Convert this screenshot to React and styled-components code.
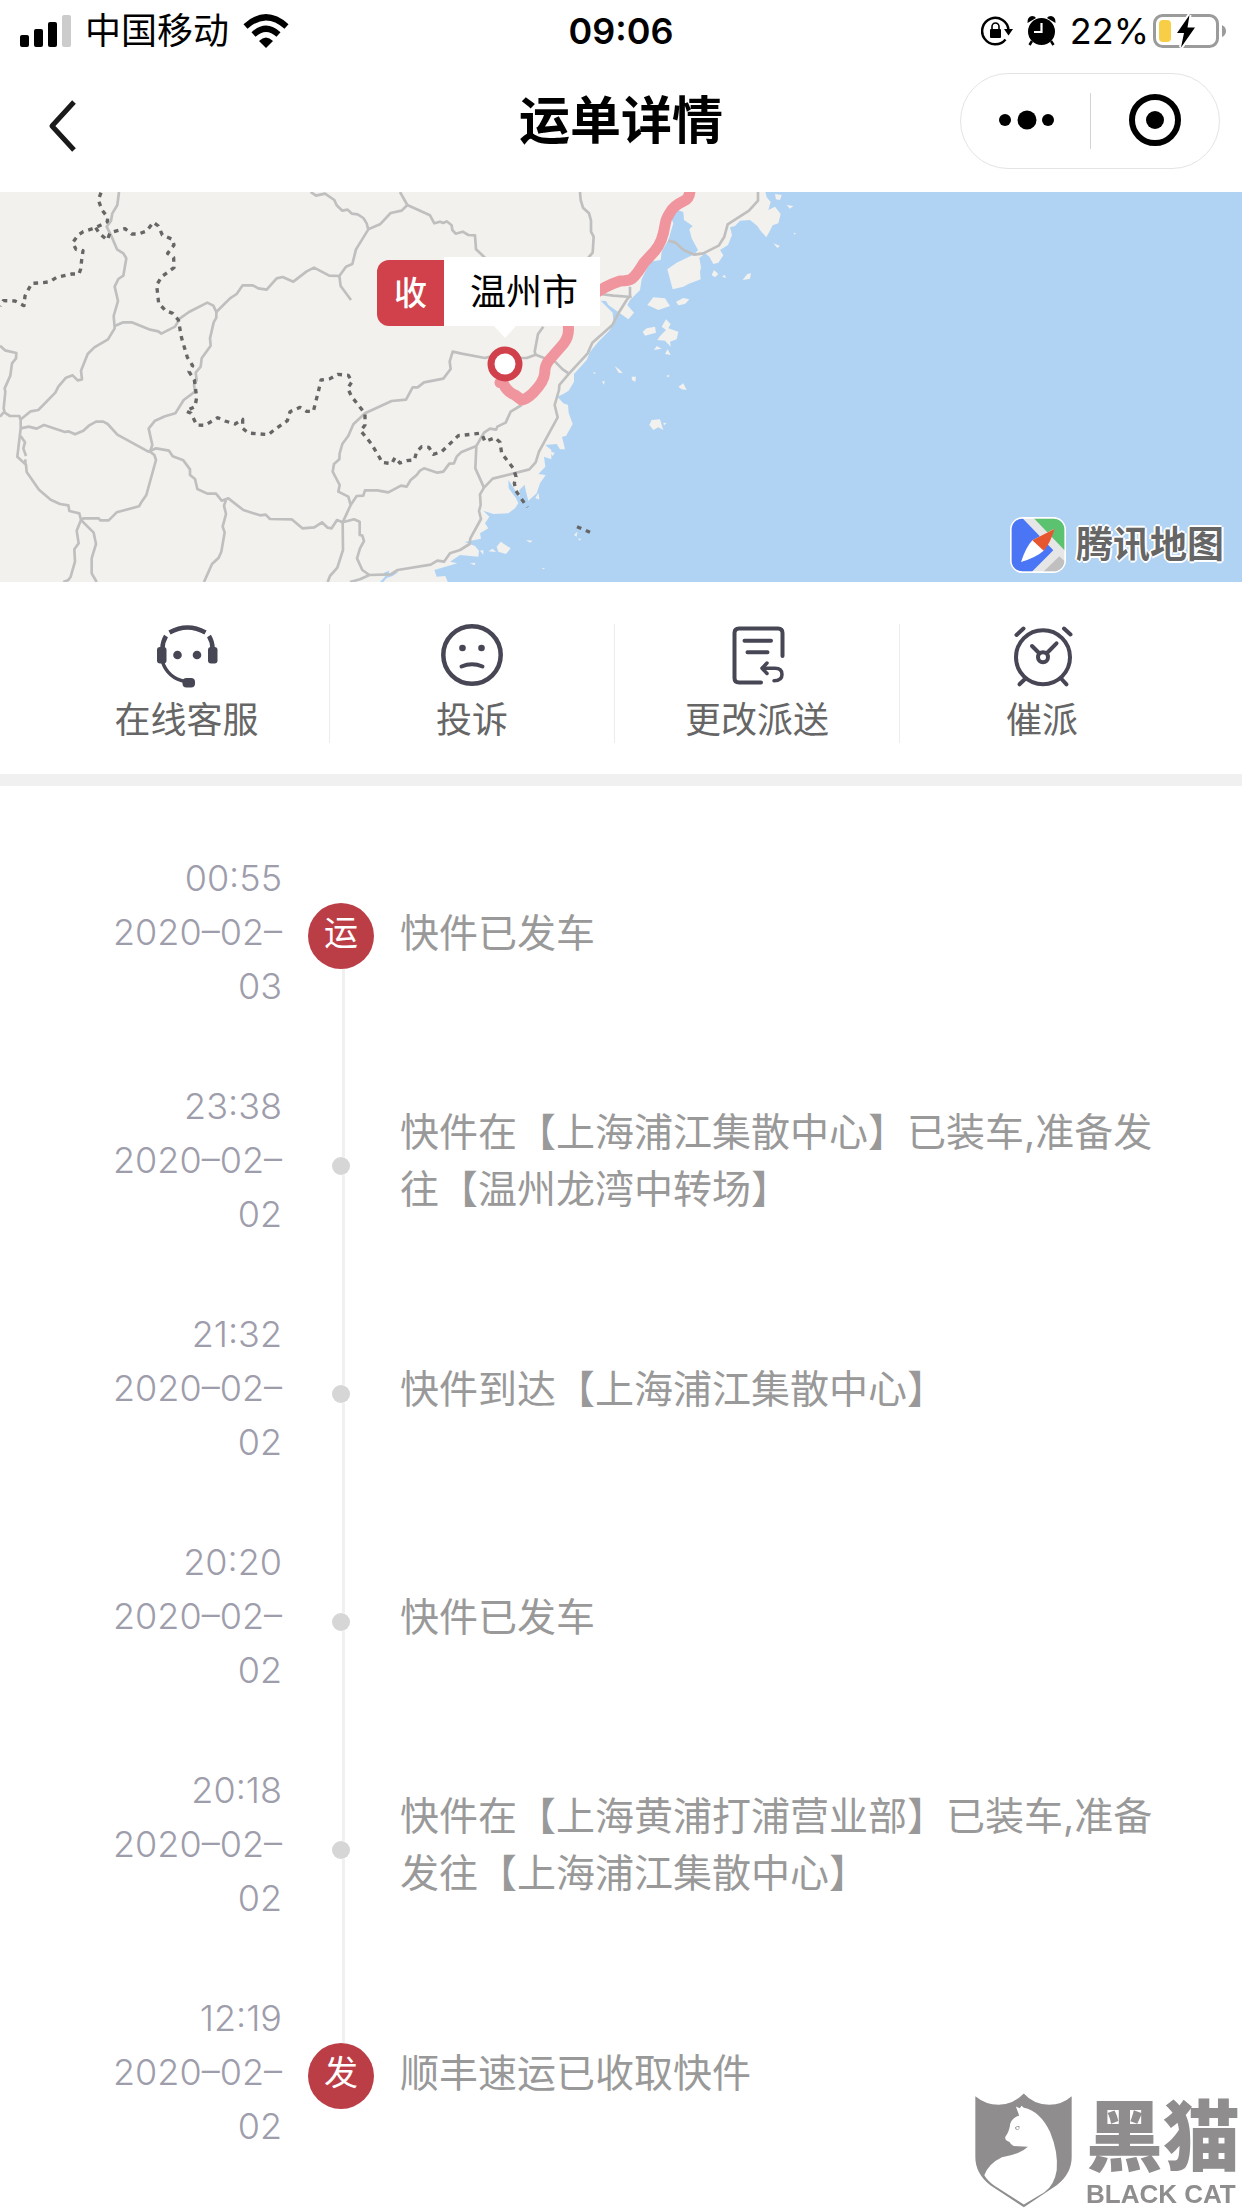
import React from 'react'
import styled, { createGlobalStyle } from 'styled-components';

const GlobalStyle = createGlobalStyle`
    *{
        box-sizing: border-box;
    }
    body{
        margin: 0;
        background-color: white;
        font-family: Inter, "Noto Sans CJK SC", sans-serif;
        color: black;
    }
    button{
        border: none;
        background: none;
        padding: 0;
        font: inherit;
        color: inherit;
        cursor: pointer;
    }
    svg{
        display: block;
        flex-shrink: 0;
    }
`

const Page = styled.div`
    min-height: 100vh;
    overflow: hidden;
`

const StatusBar = styled.div`
    display: grid;
    grid-template-columns: 1fr auto 1fr;
    align-items: center;
    height: 62px;
    padding: 0 16px;
    font-size: 36px;
    line-height: 54px;
`

const StatusGroup = styled.div`
    display: flex;
    align-items: center;
    justify-content: ${props => props.$end ? 'flex-end' : 'flex-start'};
    gap: ${props => props.$tight ? '4px' : '14px'};
`

const Clock = styled.div`
    font-weight: 600;
`

const NavBar = styled.header`
    display: grid;
    grid-template-columns: 1fr auto 1fr;
    align-items: center;
    height: 130px;
    padding: 0 22px 12px;
`

const BackButton = styled.button`
    justify-self: start;
    padding: 10px 26px 0;
`

const Title = styled.h1`
    margin: 0;
    font-size: 51px;
    line-height: 72px;
    font-weight: 700;
`

const Capsule = styled.div`
    justify-self: end;
    display: flex;
    align-items: center;
    width: 260px;
    height: 96px;
    border: 1px solid #e4e4e4;
    border-radius: 48px;
    button{
        flex: 1;
        display: flex;
        justify-content: center;
    }
    button + button{
        border-left: 1px solid #d4d4d4;
    }
`

const MapArea = styled.section`
    position: relative;
    height: 390px;
    overflow: hidden;
    background-color: #b0d3f4;
`

const Pin = styled.div`
    position: absolute;
    left: 377px;
    top: 65px;
    display: flex;
    flex-direction: column;
    align-items: center;
`

const PinLabel = styled.div`
    display: flex;
    align-items: flex-end;
    font-size: 36px;
`

const PinTag = styled.div`
    width: 67px;
    height: 66px;
    border-radius: 12px 0 0 12px;
    background-color: #d0414b;
    color: white;
    font-size: 33px;
    font-weight: 500;
    line-height: 66px;
    text-align: center;
`

const PinCity = styled.div`
    width: 156px;
    height: 69px;
    padding-left: 4px;
    background-color: white;
    line-height: 70px;
    text-align: center;
`

const PinPoint = styled.svg`
    margin-left: 32px;
`

const MapBrand = styled.div`
    position: absolute;
    right: 18px;
    bottom: 9px;
    display: flex;
    align-items: center;
    gap: 10px;
    color: #666;
    font-size: 37px;
    line-height: 56px;
    font-weight: 700;
    text-shadow: 2px 0 white, -2px 0 white, 0 2px white, 0 -2px white, 1px 1px white, -1px -1px white;
`

const Actions = styled.nav`
    display: grid;
    grid-template-columns: repeat(4, 1fr);
    padding: 42px 58px 31px 44px;
    border-bottom: 12px solid #f0f0f0;
`

const Action = styled.button`
    display: flex;
    flex-direction: column;
    align-items: center;
    gap: 8px;
    color: #666;
    font-size: 36px;
    line-height: 45px;
    & + &{
        border-left: 1px solid #ececec;
    }
    svg{
        fill: none;
        stroke: #474655;
        stroke-linecap: round;
        stroke-linejoin: round;
    }
`

const Timeline = styled.ol`
    list-style: none;
    margin: 0;
    padding: 32px 88px 22px 88px;
`

const Step = styled.li`
    display: grid;
    grid-template-columns: 194px 66px 1fr;
    column-gap: 26px;
    min-height: 228px;
`

const When = styled.time`
    align-self: center;
    color: #9e9dab;
    font-size: 36px;
    font-weight: 300;
    line-height: 54px;
    text-align: right;
    span{
        display: block;
    }
`

const Rail = styled.div`
    display: flex;
    flex-direction: column;
    align-items: center;
`

const Line = styled.div`
    width: 3px;
    margin-left: 4px;
    background-color: ${props => props.$hidden ? 'transparent' : '#f0f0f0'};
    ${props => props.$height ? `height: ${props.$height}px;` : 'flex: 1;'}
`

const Dot = styled.div`
    width: 18px;
    height: 18px;
    border-radius: 50%;
    background-color: #d6d6d6;
`

const Badge = styled.div`
    width: 66px;
    height: 66px;
    border-radius: 50%;
    background-color: #bb3e47;
    color: white;
    font-size: 34px;
    line-height: 60px;
    text-align: center;
`

const What = styled.p`
    align-self: center;
    margin: 0;
    color: #999;
    font-size: 39px;
    line-height: 57px;
`

const Watermark = styled.div`
    position: fixed;
    right: 2px;
    bottom: 0;
    display: flex;
    align-items: flex-end;
    gap: 14px;
    color: #8f8d8e;
`

const WatermarkText = styled.div`
    display: flex;
    flex-direction: column;
    font-family: "Liberation Sans", "Noto Sans CJK SC", sans-serif;
    font-size: 77px;
    font-weight: 900;
    line-height: 84px;
    small{
        font-size: 26px;
        font-weight: 700;
        line-height: 28px;
    }
`

const roads = [
    '357,6 352,45 337,70 333,92 320,110 335,140 351,178 370,190 379,205 370,257 355,267 344,290 354,333 341,378 344,415 324,448 283,472 263,492 243,542 246,568 233,571 218,556 198,563 175,590 166,608 115,660 92,664 60,690',
    '344,408 370,397 395,397 447,418 475,424 484,431 525,410 540,385 567,366 622,338 640,347 649,366',
    '649,366 690,325 710,312 728,286 758,286 775,295 800,299 830,265 848,261 880,275 920,244 942,233 988,257 1018,258 1038,230 1057,222 1068,178 1105,118 1140,103 1172,69 1205,62 1222,45 1200,6',
    '932,6 948,17 975,11 1003,30 1010,46 1027,62 1043,59 1056,71 1073,73 1090,84 1100,100 1105,118',
    '1018,258 1022,288 1053,330',
    '649,366 649,383 641,397 630,445 632,467 605,505 602,530 587,548 590,570 582,585 585,605 551,630 526,670 495,679 465,692 446,716 457,765 450,785',
    '0,467 15,481 49,489 48,505 36,520 31,557 14,595 16,605 11,655 14,668 30,678 58,678 62,690 62,715 52,800 78,824 80,846 117,899 152,929 180,942 205,946 208,963 238,970 243,990',
    '0,680 12,666',
    '62,738 75,757 70,775 78,798',
    '76,808 76,822',
    '62,715 86,710 110,716 132,705 195,726 205,724 225,733 250,722 268,706 288,695 310,695 323,702 352,734 445,785 468,775 507,782 518,799 550,811 570,838 570,855 585,867 592,897 622,911 648,911 665,932 685,925 730,960 780,976 797,974 810,987 875,988 907,1015 943,1012 966,997 983,1013 995,1015 1011,990 1028,997',
    '450,785 463,795 468,810 439,915 425,935 417,949 350,967 326,991 301,991 296,985 250,985 243,990',
    '243,990 230,1022 236,1060 223,1078 225,1115 212,1160 205,1170 190,1176',
    '243,990 281,1028 288,1062 275,1105 275,1150 290,1176',
    '678,930 672,947 678,972 668,1010 674,1027 664,1085 656,1103 636,1122 612,1176',
    '1028,997 1052,945 1045,920 1015,905 1019,885 998,845 1002,822 1018,808 1019,790 1027,762 1045,737 1060,703 1095,670 1175,633 1218,629 1238,592 1253,592 1272,577 1330,566 1352,537 1349,515 1358,485 1385,491 1455,504 1480,497 1560,504 1580,504 1607,494 1640,507 1665,515 1688,538 1707,551',
    '1028,997 1029,1080 1012,1133 990,1158 983,1176',
    '1028,997 1062,988 1079,995 1079,1035 1087,1037 1092,1053 1080,1075 1071,1105 1087,1140 1108,1155 1080,1168 1050,1176',
    '1052,945 1070,918 1090,917 1095,901 1132,901 1165,907 1203,887 1220,890 1232,870 1250,855 1260,842 1272,835 1312,848 1330,845 1348,821 1362,820 1370,800 1383,787 1429,768',
    '1222,45 1290,76 1303,100 1320,95 1330,99 1340,94 1355,106 1357,120 1367,131 1388,125 1405,135 1425,136 1428,178 1455,203',
    '1740,6 1742,30 1749,53 1767,70 1773,92 1773,125 1781,140 1778,188 1765,203',
    '2274,6 2274,32 2247,62 2183,103 2173,140 2156,167 2110,190 2083,194 2052,181 2025,157 2005,152',
    '1607,494 1604,485 1614,432 1630,410',
    '1890,290 1890,318 1880,330 1858,365 1837,405 1777,458 1763,490 1707,551 1678,585 1677,600 1664,645 1673,682 1617,785 1607,817 1588,838 1478,866 1452,893 1440,913 1442,945 1437,963 1443,987 1411,1045 1409,1062 1380,1080 1350,1090 1332,1115 1312,1112 1292,1124 1193,1140 1172,1153 1108,1155',
    '1800,312 1840,317 1895,321',
    '1565,645 1532,665 1517,698 1492,710 1488,719 1470,716 1452,728 1429,768 1426,835 1452,893'
]

const borders = [
    '303,8 295,30 306,60 323,82 322,95 287,113 250,125 235,135 218,158 228,178 249,182 245,210 242,237 237,252 215,252 170,262 150,275 130,278 95,280 75,318 72,347 45,333 10,332 0,348',
    '287,113 298,130 322,150 330,128 375,116 395,132 415,132 440,123 460,97 475,108 487,135 517,148 522,165 503,190 521,203 522,233 485,260 470,285 476,340 497,362 518,370 535,390 545,445 562,502 578,527 567,545 583,570 590,622 585,650 558,663 573,670 590,705 615,706 653,683 675,693 705,702 728,688 728,715 745,729 805,734 825,718 862,692 870,665 900,652 920,664 940,664 955,605 963,570 990,566 1013,553 1045,556 1056,575 1043,595 1055,620 1085,658 1095,672 1095,705 1082,722 1113,760 1140,805 1145,817 1175,821 1185,803 1200,819 1220,812 1243,810 1250,785 1265,770 1287,772 1300,793 1325,785 1375,737 1440,730 1447,735 1455,755 1485,743 1500,757 1505,790 1540,835 1548,860 1543,880 1548,903 1582,952',
    '1731,1010 1770,1027'
]

const mainland = '0,0 2295,0 2300,22 2312,36 2305,60 2325,50 2342,72 2335,100 2318,106 2308,125 2299,142 2280,120 2272,108 2250,90 2220,92 2205,108 2190,112 2196,135 2184,165 2160,180 2170,196 2155,218 2140,222 2128,200 2115,190 2098,204 2103,232 2100,245 2102,268 2065,282 2050,290 2018,298 2008,260 2002,238 2030,218 2055,206 2084,192 2094,180 2075,145 2068,118 2078,108 2052,90 2050,66 2025,58 2012,80 2020,100 2005,150 1985,185 1982,210 1950,215 1925,268 1920,300 1890,330 1882,345 1902,368 1885,388 1860,370 1825,345 1818,333 1802,332 1820,350 1838,368 1840,392 1830,420 1795,455 1770,485 1760,510 1722,552 1722,575 1706,602 1690,612 1672,620 1690,640 1704,645 1706,668 1718,702 1698,738 1686,740 1695,778 1680,778 1670,762 1636,765 1654,780 1654,808 1632,800 1636,830 1615,852 1637,855 1620,880 1610,910 1585,932 1578,905 1574,884 1558,900 1560,922 1545,900 1525,870 1526,895 1548,925 1555,940 1545,955 1525,970 1480,972 1450,962 1468,980 1455,1000 1465,1015 1440,1030 1443,1046 1394,1056 1425,1068 1437,1082 1435,1100 1380,1095 1350,1115 1372,1120 1303,1140 1310,1160 1336,1158 1345,1180 0,1180'

const islands = [
    '1942,345 1960,322 1995,325 2010,348 1975,360',
    '2028,335 2050,324 2068,328 2055,342 2035,346',
    '1928,425 1940,415 1965,410 1968,428 1935,437',
    '1985,410 1998,388 2012,402 2005,415 2035,425 2030,448 2010,455 2012,470 1995,452 1972,450 1980,438 1998,420',
    '1962,480 1970,468 1985,476', '1995,492 2003,478 2012,495',
    '2135,255 2142,240 2155,252 2145,262', '2166,260 2174,254 2178,264', '2228,270 2242,252 2253,250 2250,266',
    '1895,560 1908,560 1906,576 1896,570', '1844,528 1860,540 1868,550 1856,548', '1806,575 1814,572 1812,584',
    '2035,590 2050,580 2060,600 2045,598', '1998,558 2008,554 2006,562', '1780,545 1788,550 1782,552',
    '1948,705 1955,690 1980,688 1985,705 1990,720 1975,712 1960,720', '1990,698 2000,700 1992,706',
    '1490,1070 1502,1055 1532,1075 1518,1092 1495,1085', '1465,1084 1478,1076 1488,1086', '1440,1082 1450,1080 1450,1094',
    '1722,1035 1732,1025 1730,1040', '1735,1045 1744,1048 1738,1052', '1578,1050 1598,1052 1590,1058', '1650,785 1664,788 1658,798',
    '1606,925 1615,908 1618,928', '2325,12 2345,15 2340,30 2328,28', '2360,45 2380,48 2370,56', '2320,160 2340,168 2332,174', '2380,128 2388,130 2384,134',
    '1410,1120 1426,1118 1424,1126', '1625,1134 1634,1134 1632,1138'
]

function SignalIcon() {
    return (
        <svg width="55" height="32" viewBox="-4 0 55 32">
            <rect x="0" y="20" width="9" height="12" rx="2" />
            <rect x="14" y="14" width="9" height="18" rx="2" />
            <rect x="28" y="7" width="9" height="25" rx="2" />
            <rect x="42" y="0" width="9" height="32" rx="2" fill="#ccc" />
        </svg>
    )
}

function WifiIcon() {
    return (
        <svg width="46" height="34" viewBox="0 0 46 34">
            <g fill="none" stroke="black" strokeWidth="6">
                <path d="M2.5 12.5 Q23 -6 43.5 12.5" />
                <path d="M10.5 20.5 Q23 9 35.5 20.5" />
            </g>
            <path d="M16 27 Q23 20 30 27 L23 34Z" />
        </svg>
    )
}

function LockIcon() {
    return (
        <svg width="32" height="30" viewBox="0 0 32 30">
            <path d="M27.5 14 A13.2 13.2 0 1 0 24.5 23.5" fill="none" stroke="black" strokeWidth="2.5" />
            <path d="M23 13 H32 L27.5 19.5Z" />
            <rect x="9" y="13" width="11" height="9" rx="1" />
            <path d="M11 14 V10.5 a3.5 3.5 0 0 1 7 0 V14" fill="none" stroke="black" strokeWidth="1.6" />
        </svg>
    )
}

function AlarmIcon() {
    return (
        <svg width="29" height="30" viewBox="0 0 29 30">
            <circle cx="14.5" cy="15.5" r="13.5" />
            <path d="M0.5 7 Q0 1 5 0 Q8 0 9 2Z M28.5 7 Q29 1 24 0 Q21 0 20 2Z" />
            <path d="M5 25 L2.5 29 M24 25 L26.5 29" stroke="black" strokeWidth="2.5" />
            <path d="M14.5 7 V16 H7" fill="none" stroke="white" strokeWidth="2.2" />
        </svg>
    )
}

function BatteryIcon() {
    return (
        <svg width="73" height="36" viewBox="0 0 73 36">
            <rect x="1.5" y="2.5" width="63" height="31" rx="8" fill="none" stroke="#9b9b9b" strokeWidth="3" />
            <path d="M69 12 Q73 14 73 18 Q73 22 69 24Z" fill="#9b9b9b" />
            <rect x="6" y="7" width="12" height="22" rx="4" fill="#f8ce46" />
            <path d="M36.5 2 L24 20 H31 L28 34.5 L42 14.5 H34.5Z" stroke="white" strokeWidth="4" />
            <path d="M36.5 2 L24 20 H31 L28 34.5 L42 14.5 H34.5Z" />
        </svg>
    )
}

function RouteMap() {
    return (
        <svg width="100%" height="390" viewBox="0 6 3726 1170" preserveAspectRatio="xMinYMin slice" aria-hidden="true">
            <polygon points={mainland} fill="#f2f1ed" />
            {islands.map(points => <polygon key={points} points={points} fill="#f2f1ed" />)}
            <path d="M1140 1176 L1155 1160 L1152 1148 L1168 1142 L1166 1152 L1196 1146 L1178 1158 L1160 1164 L1150 1176Z" fill="#b0d3f4" />
            <g fill="none" strokeLinejoin="round">
                {roads.map(points => <polyline key={points} points={points} stroke="#bfbfbf" strokeWidth="8" />)}
                {borders.map(points => <polyline key={points} points={points} stroke="#666" strokeWidth="10" strokeDasharray="14 15" />)}
                <path d="M2070 0 Q2070 25 2050 34 Q2020 48 2010 68 Q1998 85 1995 105 Q1988 155 1965 182 L1932 218 Q1910 255 1896 266 Q1885 273 1860 273 Q1810 290 1780 315 Q1705 350 1705 410 Q1708 440 1690 462 L1648 510 Q1634 525 1634 550 Q1632 575 1600 608 Q1580 628 1565 630 L1545 615 Q1520 605 1510 580 L1500 578" stroke="#f0959d" strokeWidth="33" strokeLinecap="round" />
            </g>
        </svg>
    )
}

function BrandIcon() {
    return (
        <svg width="56" height="56" viewBox="0 0 168 168">
            <clipPath id="brandTile">
                <rect x="5" y="5" width="158" height="158" rx="32" />
            </clipPath>
            <rect width="168" height="168" rx="38" fill="white" />
            <g clipPath="url(#brandTile)">
                <rect width="168" height="168" fill="#e6e6e6" />
                <path d="M68 0 H168 V104Z" fill="#5bc270" />
                <path d="M0 0 H34 L130 100 L62 168 H0Z" fill="#4a76f5" />
                <path d="M96 168 L148 118 L168 136 V168Z" fill="#c0c0c0" />
            </g>
            <path d="M133 35 L67 70 Q48 90 33 135 Q80 120 101 101Z" fill="white" />
            <path d="M134 35 L67 70 L101 101 Q120 80 134 35Z" fill="#e6572f" />
        </svg>
    )
}

function ServiceIcon() {
    return (
        <svg width="66" height="66" viewBox="0 0 66 66">
            <g strokeWidth="4.5" style={{ strokeLinecap: 'butt' }}>
                <path d="M15.5 8.5 Q33.5 -1.5 51.5 8.5" />
                <path d="M12 12 Q8.5 18 8.5 24 M55 12 Q58.5 18 58.5 24" />
            </g>
            <path d="M8.5 38 Q14 54 31 57.5" strokeWidth="3.5" />
            <g fill="#474655" stroke="none">
                <rect x="3" y="23" width="9.5" height="16.5" rx="3" />
                <rect x="54" y="23" width="9.5" height="16.5" rx="3" />
                <rect x="28.5" y="54" width="12.5" height="9.5" rx="4" />
                <circle cx="23.5" cy="31" r="4.3" />
                <circle cx="43" cy="31" r="4.3" />
            </g>
        </svg>
    )
}

function SadIcon() {
    return (
        <svg width="66" height="66" viewBox="0 0 66 66">
            <circle cx="33" cy="31" r="28.7" strokeWidth="4.5" />
            <path d="M22.5 42.5 Q33 38 43.5 42.5" strokeWidth="4" />
            <g fill="#474655" stroke="none">
                <circle cx="23.5" cy="24" r="3.3" />
                <circle cx="42.5" cy="24" r="3.3" />
            </g>
        </svg>
    )
}

function ChangeIcon() {
    return (
        <svg width="66" height="66" viewBox="0 0 66 66" strokeWidth="4">
            <path d="M58.5 32 V9 Q58.5 4.5 54 4.5 H15 Q10.5 4.5 10.5 9 V54 Q10.5 58.5 15 58.5 H37" />
            <path d="M20.5 16.7 H47 M23.5 28.3 H43.5" />
            <path d="M38.5 44.3 H51 Q58 44.3 58 50.5 Q58 56.7 50 56.7" strokeWidth="3.5" />
            <path d="M43 39 L38 44.3 L43 49.5" strokeWidth="3.5" />
        </svg>
    )
}

function UrgeIcon() {
    return (
        <svg width="66" height="66" viewBox="0 0 66 66" strokeWidth="4">
            <circle cx="34" cy="33.3" r="27" />
            <circle cx="34" cy="33.3" r="5" />
            <path d="M7.5 11 L14.5 4.5 M55 4.5 L61.5 10.5" />
            <path d="M16 55 L10.5 60.3 M52.5 55 L57.5 60.3" />
            <path d="M30 29 L23 22 M38.5 28.5 L47.5 19.3" />
        </svg>
    )
}

function CatShield() {
    return (
        <svg width="97" height="115" viewBox="99 98 292 345">
            <path d="M100 107 Q130 132 170 133 Q215 132 246 99 Q275 132 322 133 Q362 132 390 107 V290 Q390 340 345 375 L246 441 L145 375 Q100 340 100 290Z" fill="#8f8d8e" />
            <path d="M222 138 L234 143 L239 136 L246 142 Q295 152 325 215 Q350 275 345 330 Q338 375 308 396 L246 433 L160 378 Q138 364 127 345 Q140 310 180 291 Q238 280 258 259 L215 257 Q206 252 203 245 Q188 240 190 230 Q203 212 205 190 Q212 170 232 165Z" fill="white" />
            <path d="M219 202 Q224 195 232 197 Q235 205 228 209 Q221 209 219 202Z" fill="#8f8d8e" />
            <circle cx="227" cy="203" r="4" fill="white" />
        </svg>
    )
}

const actions = [
    { label: '在线客服', icon: <ServiceIcon /> },
    { label: '投诉', icon: <SadIcon /> },
    { label: '更改派送', icon: <ChangeIcon /> },
    { label: '催派', icon: <UrgeIcon /> }
]

const steps = [
    { time: '00:55', date: '2020–02–03', badge: '运', text: '快件已发车' },
    { time: '23:38', date: '2020–02–02', text: '快件在【上海浦江集散中心】已装车,准备发往【温州龙湾中转场】' },
    { time: '21:32', date: '2020–02–02', text: '快件到达【上海浦江集散中心】' },
    { time: '20:20', date: '2020–02–02', text: '快件已发车' },
    { time: '20:18', date: '2020–02–02', text: '快件在【上海黄浦打浦营业部】已装车,准备发往【上海浦江集散中心】' },
    { time: '12:19', date: '2020–02–02', badge: '发', text: '顺丰速运已收取快件' }
]

function App() {
    return (
        <Page lang="zh-CN">
            <GlobalStyle />
            <StatusBar>
                <StatusGroup>
                    <SignalIcon />
                    <span>中国移动</span>
                    <WifiIcon />
                </StatusGroup>
                <Clock>09:06</Clock>
                <StatusGroup $end>
                    <LockIcon />
                    <AlarmIcon />
                    <StatusGroup $tight>
                        <span>22%</span>
                        <BatteryIcon />
                    </StatusGroup>
                </StatusGroup>
            </StatusBar>
            <NavBar>
                <BackButton aria-label="返回">
                    <svg width="30" height="52" viewBox="0 0 30 52">
                        <path d="M26 2 L4 26 L26 50" fill="none" stroke="#1a1a1a" strokeWidth="5" strokeLinejoin="round" />
                    </svg>
                </BackButton>
                <Title>运单详情</Title>
                <Capsule>
                    <button aria-label="更多">
                        <svg width="58" height="56" viewBox="0 0 58 56">
                            <circle cx="9" cy="27" r="6" />
                            <circle cx="31" cy="27" r="9.5" />
                            <circle cx="52" cy="27" r="6" />
                        </svg>
                    </button>
                    <button aria-label="关闭">
                        <svg width="56" height="56" viewBox="0 0 56 56">
                            <circle cx="28" cy="27" r="23" fill="none" stroke="black" strokeWidth="6" />
                            <circle cx="28" cy="27" r="9" />
                        </svg>
                    </button>
                </Capsule>
            </NavBar>
            <MapArea>
                <RouteMap />
                <Pin>
                    <PinLabel>
                        <PinTag>收</PinTag>
                        <PinCity>温州市</PinCity>
                    </PinLabel>
                    <PinPoint width="36" height="56" viewBox="0 0 36 56">
                        <path d="M7 0 H29 L18 12Z" fill="white" />
                        <circle cx="18" cy="38" r="14" fill="white" stroke="#d0414b" strokeWidth="7" />
                    </PinPoint>
                </Pin>
                <MapBrand>
                    <BrandIcon />
                    腾讯地图
                </MapBrand>
            </MapArea>
            <Actions>
                {actions.map(({ label, icon }) => (
                    <Action key={label}>
                        {icon}
                        {label}
                    </Action>
                ))}
            </Actions>
            <Timeline>
                {steps.map(({ time, date, badge, text }, i) => (
                    <Step key={time}>
                        <When>
                            <span>{time}</span>
                            <span>{date}</span>
                        </When>
                        <Rail>
                            <Line $height={badge ? 85 : 111} $hidden={i === 0} />
                            {badge ? <Badge>{badge}</Badge> : <Dot />}
                            <Line $hidden={i === steps.length - 1} />
                        </Rail>
                        <What>{text}</What>
                    </Step>
                ))}
            </Timeline>
            <Watermark>
                <CatShield />
                <WatermarkText>
                    黑猫
                    <small>BLACK CAT</small>
                </WatermarkText>
            </Watermark>
        </Page>
    )
}

export default App
